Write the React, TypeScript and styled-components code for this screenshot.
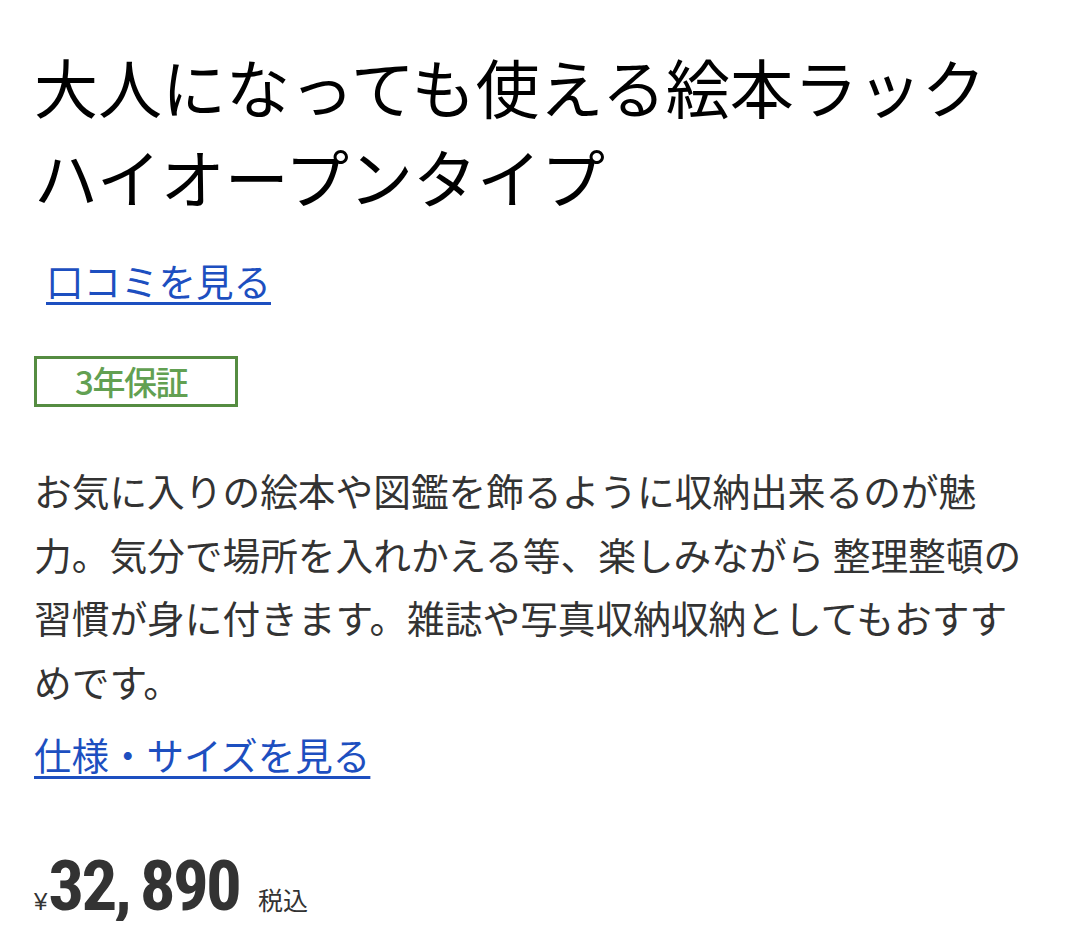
import styled, { createGlobalStyle } from "styled-components";

const GlobalStyle = createGlobalStyle`
  html, body {
    margin: 0;
    padding: 0;
    background: #fff;
  }
  body {
    font-family: "Noto Sans CJK JP", "Noto Sans", sans-serif;
  }
`;

const Page = styled.main`
  padding: 40px 35px 0 34px;
  width: 1010px;
`;

const Title = styled.h1`
  margin: 0;
  font-size: 64px;
  line-height: 90px;
  font-weight: 400;
  color: #000;
`;

const TextLink = styled.a<{ $indent?: number }>`
  display: inline-block;
  margin-left: ${(p) => p.$indent ?? 0}px;
  font-size: 37.5px;
  line-height: 56px;
  color: #1d4fc0;
  text-decoration: underline;
  text-underline-offset: 6px;
  text-decoration-thickness: 3px;
  cursor: pointer;
`;

const Block = styled.div<{ $top: number }>`
  margin-top: ${(p) => p.$top}px;
`;

const Badge = styled.span`
  display: inline-flex;
  align-items: center;
  justify-content: center;
  box-sizing: border-box;
  width: 204px;
  height: 51px;
  border: 3px solid #558c41;
  color: #62a052;
  font-size: 33px;
  font-weight: 500;
  line-height: 1;
  letter-spacing: -1.5px;
  padding-right: 10px;
`;

const Description = styled.p`
  margin: 0;
  font-size: 37.7px;
  line-height: 63.5px;
  color: #333;
`;

const PriceRow = styled.div`
  display: flex;
  align-items: baseline;
  color: #333;
`;

const Yen = styled.span`
  font-family: "Liberation Sans", sans-serif;
  font-size: 24px;
  margin-right: 1px;
`;

const Amount = styled.span`
  font-family: Roboto, "Noto Sans", sans-serif;
  font-stretch: 75%;
  font-weight: 700;
  font-size: 71px;
  line-height: 1;
  letter-spacing: -2.8px;
`;

const Tax = styled.span`
  margin-left: 19px;
  font-size: 25px;
`;

export default function App() {
  return (
    <>
      <GlobalStyle />
      <Page>
        <Title>
          大人になっても使える絵本ラック
          <br />
          ハイオープンタイプ
        </Title>
        <Block $top={32}>
          <TextLink $indent={12}>口コミを見る</TextLink>
        </Block>
        <Block $top={48}>
          <Badge>3年保証</Badge>
        </Block>
        <Block $top={51}>
          <Description>
            お気に入りの絵本や図鑑を飾るように収納出来るのが魅力。気分で場所を入れかえる等、楽しみながら 整理整頓の習慣が身に付きます。雑誌や写真収納収納としてもおすすめです。
          </Description>
        </Block>
        <Block $top={14}>
          <TextLink>仕様・サイズを見る</TextLink>
        </Block>
        <Block $top={68}>
          <PriceRow>
            <Yen>¥</Yen>
            <Amount>32,{"\u2009"}890</Amount>
            <Tax>税込</Tax>
          </PriceRow>
        </Block>
      </Page>
    </>
  );
}
